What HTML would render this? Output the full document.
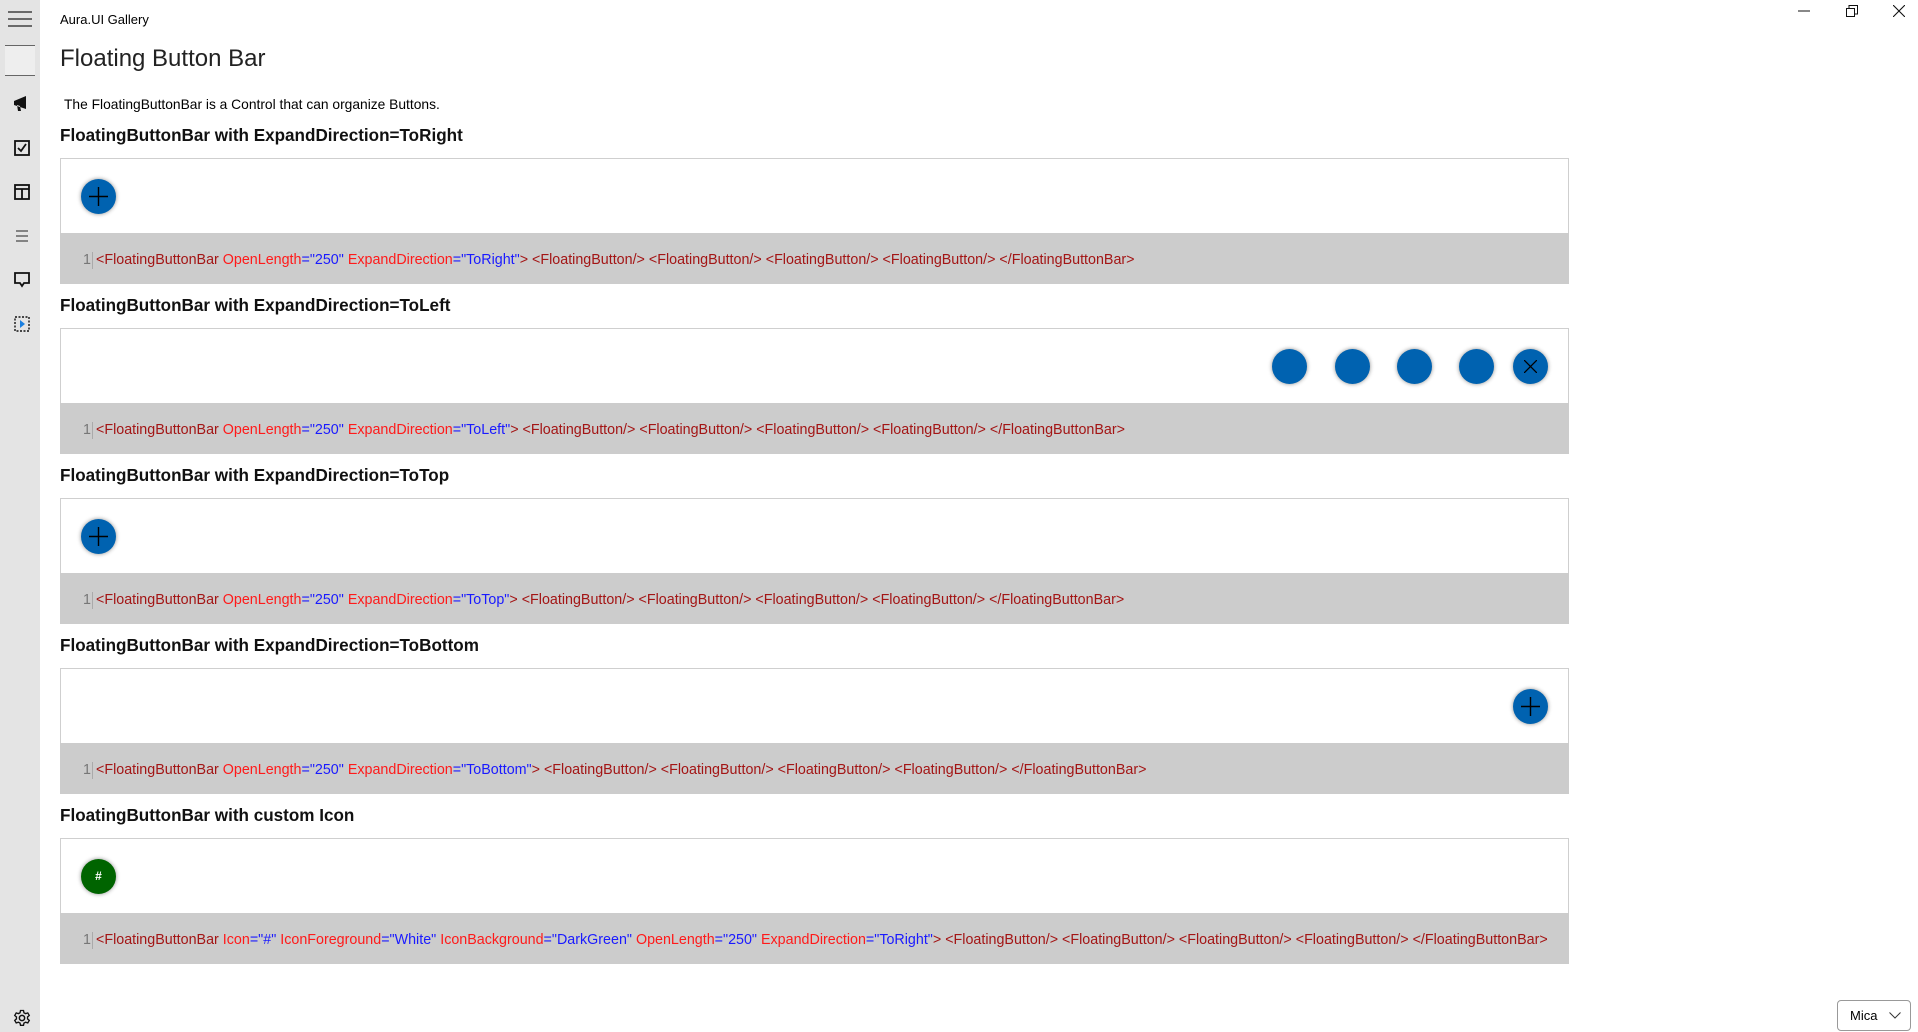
<!DOCTYPE html>
<html><head><meta charset="utf-8"><style>
*{margin:0;padding:0;box-sizing:border-box}
body{width:1918px;height:1032px;overflow:hidden;background:#fff;font-family:"Liberation Sans",sans-serif;color:#000;position:relative}
.side{position:absolute;left:0;top:0;width:40px;height:1032px;background:#e4e4e4}
.ab{position:absolute}
.t1{left:60px;top:12px;font-size:13px}
.title{left:60px;top:45px;font-size:24px;font-weight:300;color:#222}
.desc{left:64px;top:97px;font-size:13.8px}
.h{position:absolute;left:60px;font-size:17.1px;font-weight:bold;color:#111}
.box{position:absolute;left:60px;width:1509px;height:126px;border:1px solid #cfcfcf;background:#fff}
.code{position:absolute;left:-1px;right:-1px;bottom:-1px;height:51px;background:#cccccc;font-size:14.3px;line-height:54px;white-space:nowrap;color:#a31515}
.code .n{position:absolute;left:23px;color:#777;}
.code .bar{position:absolute;left:32px;top:19px;width:1px;height:17px;background:#aaa}
.code .c{position:absolute;left:36px}
.a{color:#ff1a1a}.v{color:#1a1aff}
.fb{position:absolute;width:35px;height:35px;border-radius:50%;background:#0062b0;box-shadow:0 0 4px rgba(0,0,0,.45)}
svg{position:absolute}
</style></head><body>
<div class="side">
<svg style="left:8px;top:11px" width="24" height="16"><path d="M0 1H24M0 8H24M0 15H24" stroke="#222" stroke-width="1.3"/></svg>
<div class="ab" style="left:5px;top:45px;width:30px;height:31px;background:#eeeeee;border-top:1px solid #666;border-bottom:1px solid #666"></div>
<svg style="left:13px;top:96px" width="18" height="17"><path d="M1 5L13 0V13L1 9Z M4 9L5 15H8L7 10" fill="#111"/></svg>
<svg style="left:14px;top:140px" width="16" height="16"><rect x="1" y="1" width="14" height="14" fill="none" stroke="#111" stroke-width="1.8"/><path d="M4 8L7 11L12 4" fill="none" stroke="#111" stroke-width="1.8"/></svg>
<svg style="left:14px;top:184px" width="16" height="16"><rect x="1" y="1" width="14" height="14" fill="none" stroke="#111" stroke-width="1.8"/><path d="M1 5H15M8 5V15" stroke="#111" stroke-width="1.8"/></svg>
<svg style="left:16px;top:230px" width="12" height="12"><path d="M0 1H12M0 6H12M0 11H12" stroke="#222" stroke-width="1.1"/></svg>
<svg style="left:14px;top:272px" width="16" height="16"><path d="M1 1H15V11H10L8 14L6 11H1Z" fill="none" stroke="#111" stroke-width="1.8"/></svg>
<svg style="left:14px;top:316px" width="16" height="16"><rect x="1" y="1" width="14" height="14" fill="none" stroke="#111" stroke-width="1.4" stroke-dasharray="2 1.5"/><path d="M6 4L11 8L6 12Z" fill="#1a7fe0"/></svg>
<svg style="left:13px;top:1009px" width="18" height="18" viewBox="0 0 24 24"><circle cx="12" cy="12" r="3.5" fill="none" stroke="#111" stroke-width="2"/><path d="M10 2h4l.6 3 2.2 1.2 2.9-1 2 3.4-2.3 2 .0 2.6 2.3 2-2 3.4-2.9-1-2.2 1.2-.6 3h-4l-.6-3-2.2-1.2-2.9 1-2-3.4 2.3-2v-2.6l-2.3-2 2-3.4 2.9 1 2.2-1.2z" fill="none" stroke="#111" stroke-width="1.8"/></svg>
</div>
<svg style="left:1798px;top:10px" width="12" height="2"><path d="M0 1H12" stroke="#111"/></svg>
<svg style="left:1846px;top:5px" width="12" height="12"><rect x="0.5" y="3.5" width="8" height="8" fill="none" stroke="#111"/><path d="M3 3.5V0.5H11.5V9H8.5" fill="none" stroke="#111"/></svg>
<svg style="left:1893px;top:5px" width="12" height="12"><path d="M0 0L12 12M12 0L0 12" stroke="#111" stroke-width="1.1"/></svg>
<div class="ab t1">Aura.UI Gallery</div>
<div class="ab title">Floating Button Bar</div>
<div class="ab desc">The FloatingButtonBar is a Control that can organize Buttons.</div>

<div class="h" style="top:126px">FloatingButtonBar with ExpandDirection=ToRight</div>
<div class="box" style="top:158px">
<div class="fb" style="left:20px;top:20px"><svg style="left:8px;top:8px" width="19" height="19"><path d="M9.5 0V19M0 9.5H19" stroke="#000" stroke-width="1.4"/></svg></div>
<div class="code"><span class="n">1</span><span class="bar"></span><span class="c">&lt;FloatingButtonBar <span class="a">OpenLength</span><span class="v">="250"</span> <span class="a">ExpandDirection</span><span class="v">="ToRight"</span>&gt; &lt;FloatingButton/&gt; &lt;FloatingButton/&gt; &lt;FloatingButton/&gt; &lt;FloatingButton/&gt; &lt;/FloatingButtonBar&gt;</span></div>
</div>

<div class="h" style="top:296px">FloatingButtonBar with ExpandDirection=ToLeft</div>
<div class="box" style="top:328px">
<div class="fb" style="left:1211px;top:20px"></div>
<div class="fb" style="left:1274px;top:20px"></div>
<div class="fb" style="left:1336px;top:20px"></div>
<div class="fb" style="left:1398px;top:20px"></div>
<div class="fb" style="left:1452px;top:20px"><svg style="left:11px;top:11px" width="13" height="13"><path d="M0 0L13 13M13 0L0 13" stroke="#000" stroke-width="1.3"/></svg></div>
<div class="code"><span class="n">1</span><span class="bar"></span><span class="c">&lt;FloatingButtonBar <span class="a">OpenLength</span><span class="v">="250"</span> <span class="a">ExpandDirection</span><span class="v">="ToLeft"</span>&gt; &lt;FloatingButton/&gt; &lt;FloatingButton/&gt; &lt;FloatingButton/&gt; &lt;FloatingButton/&gt; &lt;/FloatingButtonBar&gt;</span></div>
</div>

<div class="h" style="top:466px">FloatingButtonBar with ExpandDirection=ToTop</div>
<div class="box" style="top:498px">
<div class="fb" style="left:20px;top:20px"><svg style="left:8px;top:8px" width="19" height="19"><path d="M9.5 0V19M0 9.5H19" stroke="#000" stroke-width="1.4"/></svg></div>
<div class="code"><span class="n">1</span><span class="bar"></span><span class="c">&lt;FloatingButtonBar <span class="a">OpenLength</span><span class="v">="250"</span> <span class="a">ExpandDirection</span><span class="v">="ToTop"</span>&gt; &lt;FloatingButton/&gt; &lt;FloatingButton/&gt; &lt;FloatingButton/&gt; &lt;FloatingButton/&gt; &lt;/FloatingButtonBar&gt;</span></div>
</div>

<div class="h" style="top:636px">FloatingButtonBar with ExpandDirection=ToBottom</div>
<div class="box" style="top:668px">
<div class="fb" style="left:1452px;top:20px"><svg style="left:8px;top:8px" width="19" height="19"><path d="M9.5 0V19M0 9.5H19" stroke="#000" stroke-width="1.4"/></svg></div>
<div class="code"><span class="n">1</span><span class="bar"></span><span class="c">&lt;FloatingButtonBar <span class="a">OpenLength</span><span class="v">="250"</span> <span class="a">ExpandDirection</span><span class="v">="ToBottom"</span>&gt; &lt;FloatingButton/&gt; &lt;FloatingButton/&gt; &lt;FloatingButton/&gt; &lt;FloatingButton/&gt; &lt;/FloatingButtonBar&gt;</span></div>
</div>

<div class="h" style="top:806px">FloatingButtonBar with custom Icon</div>
<div class="box" style="top:838px">
<div class="fb" style="left:20px;top:20px;background:#006400;color:#fff;font-size:12px;font-weight:bold;text-align:center;line-height:35px">#</div>
<div class="code"><span class="n">1</span><span class="bar"></span><span class="c">&lt;FloatingButtonBar <span class="a">Icon</span><span class="v">="#"</span> <span class="a">IconForeground</span><span class="v">="White"</span> <span class="a">IconBackground</span><span class="v">="DarkGreen"</span> <span class="a">OpenLength</span><span class="v">="250"</span> <span class="a">ExpandDirection</span><span class="v">="ToRight"</span>&gt; &lt;FloatingButton/&gt; &lt;FloatingButton/&gt; &lt;FloatingButton/&gt; &lt;FloatingButton/&gt; &lt;/FloatingButtonBar&gt;</span></div>
</div>

<div class="ab" style="left:1837px;top:1000px;width:74px;height:31px;border:1px solid #999;border-radius:4px;font-size:13px;line-height:29px;padding-left:12px">Mica<svg style="left:51px;top:11px" width="12" height="7"><path d="M0.5 0.5L6 6L11.5 0.5" fill="none" stroke="#333"/></svg></div>
</body></html>
